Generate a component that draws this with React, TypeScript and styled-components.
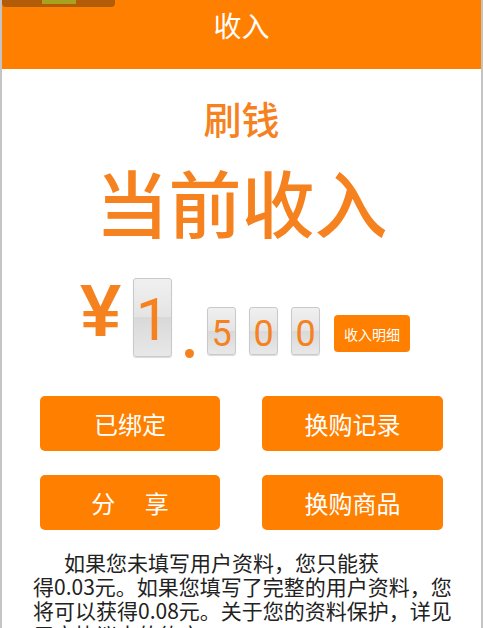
import styled, { createGlobalStyle } from "styled-components";

const GlobalStyle = createGlobalStyle`
  html, body {
    margin: 0;
    padding: 0;
    background: #fff;
    overflow: hidden;
  }
  body {
    font-family: "Noto Sans CJK SC", "Noto Sans", sans-serif;
  }
`;

const ORANGE = "#ff7f00";
const TEXT_ORANGE = "#f5821f";

const Page = styled.div`
  position: relative;
  width: 483px;
  height: 628px;
  box-sizing: border-box;
  border-left: 2px solid #c4c4c4;
  border-right: 2px solid #c4c4c4;
  overflow: hidden;
  background: #fff;
`;

const StatusBadge = styled.div`
  position: absolute;
  left: 0;
  top: 0;
  width: 113px;
  height: 7px;
  background: #b35c08;
  border-radius: 0 0 4px 4px;
  span {
    position: absolute;
    left: 40px;
    top: 0;
    width: 34px;
    height: 4px;
    background: #a9a21e;
  }
`;

const Header = styled.header`
  height: 69px;
  box-sizing: border-box;
  padding-top: 8px;
  background: ${ORANGE};
  color: #fff;
  text-align: center;
  font-size: 28px;
  line-height: 34px;
`;

const Brand = styled.div`
  margin-top: 27px;
  text-align: center;
  font-size: 38px;
  font-weight: 500;
  line-height: 44px;
  color: ${TEXT_ORANGE};
`;

const Headline = styled.div`
  margin-top: 20px;
  text-align: center;
  font-size: 73px;
  font-weight: 500;
  line-height: 80px;
  color: ${TEXT_ORANGE};
`;

const MoneyRow = styled.div`
  margin-top: 38px;
  display: flex;
  align-items: flex-end;
  gap: 13px;
  padding-left: 78px;
  height: 79px;
`;

const Yen = styled.span`
  font-family: "Liberation Sans", Arial, sans-serif;
  font-weight: 700;
  font-size: 74px;
  line-height: 74px;
  width: 40px;
  color: ${TEXT_ORANGE};
  margin-bottom: 9px;
  text-align: center;
`;

const Tile = styled.div<{ $big?: boolean }>`
  box-sizing: border-box;
  width: ${(p) => (p.$big ? "39px" : "29px")};
  height: ${(p) => (p.$big ? "79px" : "48px")};
  margin-bottom: ${(p) => (p.$big ? "0" : "2px")};
  border: 1px solid #c9c9c9;
  border-radius: 3px;
  background: linear-gradient(
    #f0f0f0 0%,
    #e4e4e4 49%,
    #d9d9d9 50%,
    #e8e8e8 100%
  );
  box-shadow: 0 1px 1px rgba(0, 0, 0, 0.15);
  display: flex;
  align-items: center;
  justify-content: center;
  font-family: Roboto, "Noto Sans", sans-serif;
  font-size: ${(p) => (p.$big ? "60px" : "36px")};
  line-height: 1;
  color: ${TEXT_ORANGE};
  padding-top: ${(p) => (p.$big ? "4px" : "5px")};
`;

const Dot = styled.span`
  width: 9px;
  height: 9px;
  margin-bottom: -1px;
  border-radius: 50%;
  background: ${TEXT_ORANGE};
`;

const DetailButton = styled.button`
  margin-bottom: 5px;
  margin-left: 1px;
  width: 76px;
  height: 37px;
  border: none;
  border-radius: 4px;
  background: ${ORANGE};
  color: #fff;
  font-family: "Noto Sans CJK SC", sans-serif;
  font-size: 14px;
  padding: 0;
`;

const ActionGrid = styled.div`
  margin: 39px auto 0;
  width: 403px;
  display: grid;
  grid-template-columns: 180px 181px;
  column-gap: 42px;
  row-gap: 24px;
`;

const ActionButton = styled.button`
  height: 55px;
  border: none;
  border-radius: 5px;
  background: ${ORANGE};
  color: #fff;
  font-family: "Noto Sans CJK SC", sans-serif;
  font-size: 24px;
  padding: 0;
  white-space: pre;
`;

const Notice = styled.p`
  margin: 20px 0 0;
  padding: 0 31px;
  font-size: 21px;
  line-height: 24px;
  color: #222;
  text-indent: 31px;
  white-space: nowrap;
`;

export default function App() {
  return (
    <>
      <GlobalStyle />
      <Page>
        <Header>收入</Header>
        <StatusBadge>
          <span />
        </StatusBadge>
        <Brand>刷钱</Brand>
        <Headline>当前收入</Headline>
        <MoneyRow>
          <Yen>¥</Yen>
          <Tile $big>1</Tile>
          <Dot />
          <Tile>5</Tile>
          <Tile>0</Tile>
          <Tile>0</Tile>
          <DetailButton>收入明细</DetailButton>
        </MoneyRow>
        <ActionGrid>
          <ActionButton>已绑定</ActionButton>
          <ActionButton>换购记录</ActionButton>
          <ActionButton>{"分　 享"}</ActionButton>
          <ActionButton>换购商品</ActionButton>
        </ActionGrid>
        <Notice>
          如果您未填写用户资料，您只能获
          <br />
          得0.03元。如果您填写了完整的用户资料，您
          <br />
          将可以获得0.08元。关于您的资料保护，详见
          <br />
          用户协议中的约定。
        </Notice>
      </Page>
    </>
  );
}
